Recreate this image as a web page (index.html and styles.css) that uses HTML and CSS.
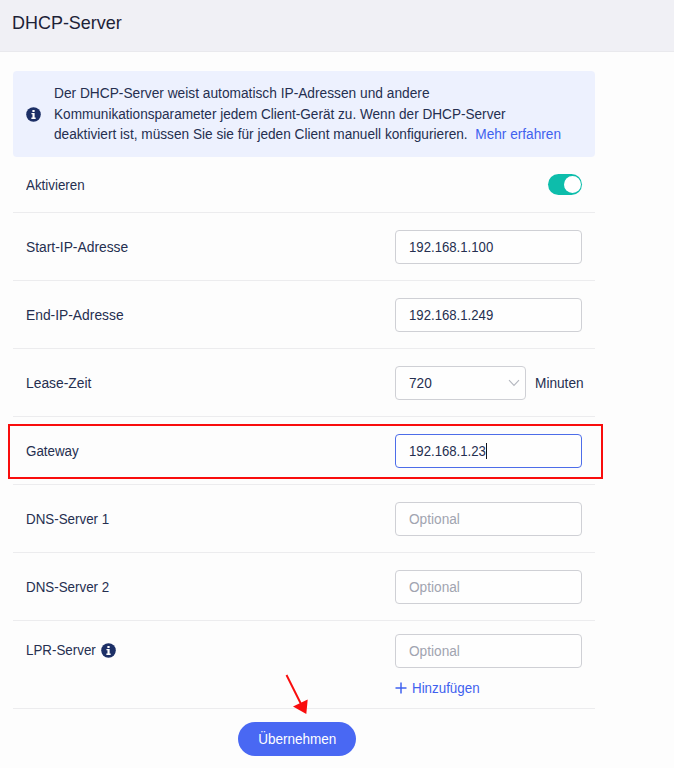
FILE: index.html
```html
<!DOCTYPE html>
<html lang="de">
<head>
<meta charset="utf-8">
<title>DHCP-Server</title>
<link rel="stylesheet" href="styles.css">
</head>
<body>
<header class="header"><h1 class="title narrow">DHCP-Server</h1></header>
<main class="content">
  <section class="notice">
    <svg class="info" viewBox="0 0 16 16"><circle cx="8" cy="8" r="7.8"/><path d="M6.8 3.2h2.4v2.2H6.8zM5.8 6.5h3.4v4.8h1.1v1.4H5.7v-1.4h1.2V7.8H5.8z"/></svg>
    <p class="notice-text">
      <span class="narrow line1">Der DHCP-Server weist automatisch IP-Adressen und andere</span>
      <span class="narrow line2">Kommunikationsparameter jedem Client-Gerät zu. Wenn der DHCP-Server</span>
      <span class="narrow">deaktiviert ist, müssen Sie sie für jeden Client manuell konfigurieren.&nbsp; <a class="link">Mehr erfahren</a></span>
    </p>
  </section>
  <section class="row row-toggle"><span class="narrow tight">Aktivieren</span><span class="switch"><span class="knob"></span></span></section>
  <section class="row"><span class="narrow wide">Start-IP-Adresse</span><div class="field"><span class="narrow number">192.168.1.100</span></div></section>
  <section class="row"><span class="narrow wide">End-IP-Adresse</span><div class="field"><span class="narrow number">192.168.1.249</span></div></section>
  <section class="row"><span class="narrow wide">Lease-Zeit</span>
    <div class="group">
      <div class="field select"><span class="narrow">720</span><svg class="chevron" viewBox="0 0 12 8"><path d="M1 1.2 6 6.4 11 1.2"/></svg></div>
      <span class="narrow">Minuten</span>
    </div>
  </section>
  <section class="row row-gateway"><span class="narrow tight">Gateway</span><div class="field focused"><span class="narrow number">192.168.1.23</span><span class="caret"></span></div><div class="highlight"></div></section>
  <section class="row"><span class="narrow tight">DNS-Server 1</span><div class="field"><span class="narrow placeholder">Optional</span></div></section>
  <section class="row"><span class="narrow tight">DNS-Server 2</span><div class="field"><span class="narrow placeholder">Optional</span></div></section>
  <section class="row row-lpr">
    <div class="label"><span class="narrow tight lpr">LPR-Server</span><svg class="info" viewBox="0 0 16 16"><circle cx="8" cy="8" r="7.8"/><path d="M6.8 3.2h2.4v2.2H6.8zM5.8 6.5h3.4v4.8h1.1v1.4H5.7v-1.4h1.2V7.8H5.8z"/></svg></div>
    <div class="stack">
      <div class="field"><span class="narrow placeholder">Optional</span></div>
      <a class="add link"><svg class="plus" viewBox="0 0 12 12"><path d="M6 .5v11M.5 6h11"/></svg><span class="narrow tight">Hinzufügen</span></a>
    </div>
  </section>
  <footer class="footer">
    <button class="submit"><span class="narrow">Übernehmen</span></button>
    <svg class="arrow" viewBox="0 0 24 42"><path class="shaft" d="M2.5 2 17 31"/><path class="head" d="M9 33.5 23.7 26.5 22.3 41z"/></svg>
  </footer>
</main>
</body>
</html>
```
FILE: styles.css
```css
* { box-sizing: border-box; }
body { margin: 0; height: 768px; overflow: hidden; background: #fdfdfd; color: #252f50; font: 15.5px/20px "Liberation Sans", Arial, sans-serif; }
.narrow { display: inline-block; white-space: nowrap; transform: scaleX(.881); transform-origin: left center; }
.line1 { transform: scaleX(.886); }
.line2 { transform: scaleX(.877); }
.tight { transform: scaleX(.862); }
.wide { transform: scaleX(.892); }
.number { transform: scaleX(.85); }
.header { height: 52px; padding: 10px 12px; background: #f0f0f5; border-bottom: 1px solid #e9e9ed; }
.title { margin: 0; font-size: 19px; line-height: 25px; font-weight: 400; color: #1c2237; transform: scaleX(.945); }
.content { width: 582px; margin: 19px 0 0 13px; }
.notice { height: 86px; display: flex; align-items: center; padding-left: 13px; gap: 13px; border-radius: 4px; background: #edf1fe; }
.info { width: 15px; height: 15px; flex: none; fill: #1c2f66; }
.info path { fill: #fff; }
.notice-text { margin: 0; display: flex; flex-direction: column; line-height: 20.5px; }
.link { color: #3f61ef; }
.row { height: 68px; display: flex; align-items: center; justify-content: space-between; padding: 0 13px; border-bottom: 1px solid #ececee; }
.row-toggle { height: 56px; }
.switch { width: 34px; height: 21px; padding: 2px 1px; border-radius: 11px; display: flex; justify-content: flex-end; background: #0dbdab; }
.knob { width: 17px; height: 17px; border-radius: 50%; background: #fff; }
.field { width: 187px; height: 34px; display: flex; align-items: center; padding-left: 13px; border: 1px solid #cfd0d5; border-radius: 4px; background: #fefefe; }
.group { width: 187px; display: flex; align-items: center; gap: 9px; white-space: nowrap; }
.select { width: 131px; flex: none; justify-content: space-between; padding-right: 5px; }
.chevron { width: 12px; height: 8px; fill: none; stroke: #b4b7bf; stroke-width: 1.1; }
.focused { border-color: #4d6de9; }
.caret { width: 1px; height: 16px; margin-left: -14px; background: #10131e; }
.placeholder { color: #a1a4b0; }
.row-gateway { position: relative; }
.highlight { position: absolute; left: -5px; top: 7px; width: 595px; height: 55px; border: 2px solid #f90d0d; }
.row-lpr { height: 88px; align-items: flex-start; padding-top: 13px; }
.label { display: flex; align-items: center; padding-top: 6px; }
.lpr { margin-right: -6px; }
.stack { display: flex; flex-direction: column; gap: 10px; }
.add { display: flex; align-items: center; gap: 5px; }
.plus { width: 12px; height: 12px; fill: none; stroke: #3f61ef; stroke-width: 1.5; }
.footer { position: relative; padding-top: 13px; display: flex; justify-content: center; }
.submit { width: 118px; height: 34px; margin-right: 14px; padding: 0; border: 0; border-radius: 17px; background: #4968f3; color: #fff; font: inherit; }
.submit .narrow { transform: translateX(.5px) scaleX(.872); transform-origin: center; }
.arrow { position: absolute; left: 271px; top: -36px; width: 24px; height: 42px; }
.shaft { stroke: #f90d0d; stroke-width: 2; fill: none; }
.head { fill: #f90d0d; }
```
